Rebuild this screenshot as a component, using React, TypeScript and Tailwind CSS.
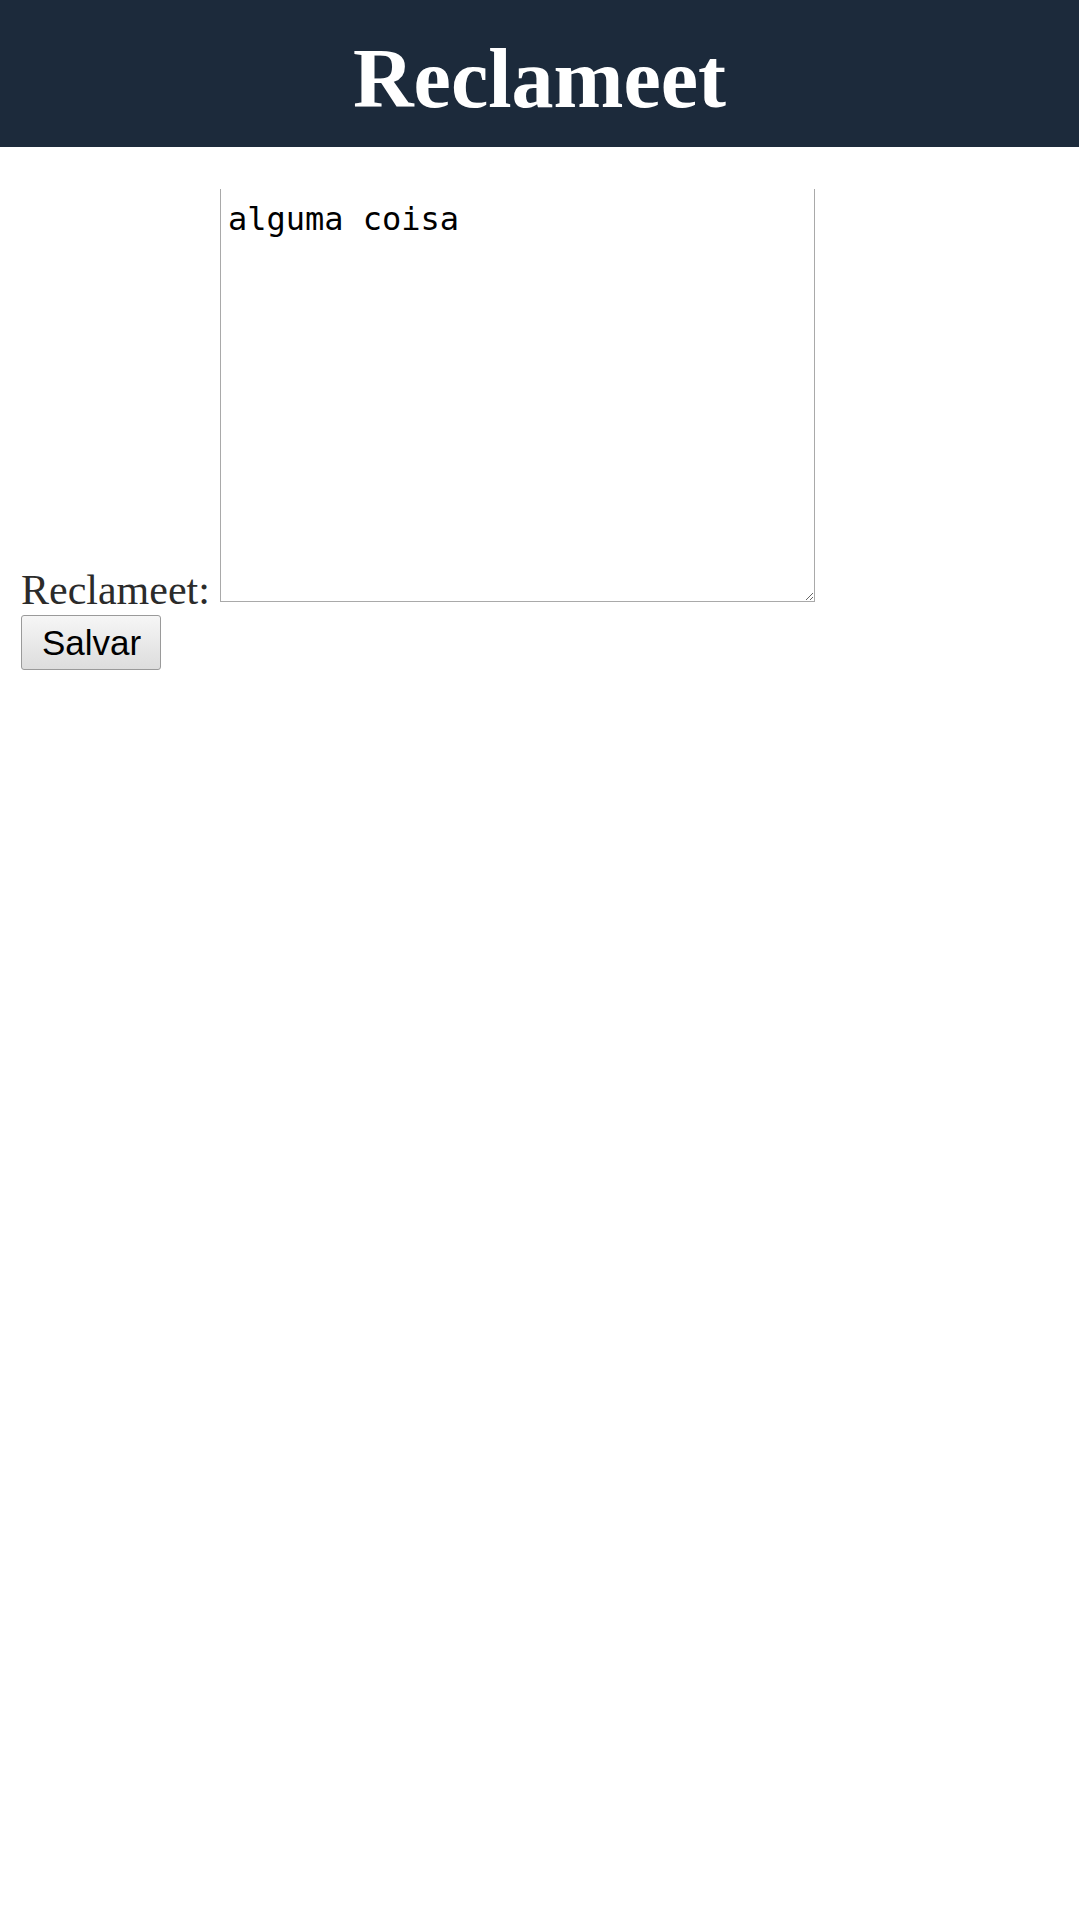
import { useState } from "react";

const App = () => {
  const [texto, setTexto] = useState("alguma coisa");

  return (
    <div className="min-h-screen bg-white">
      <header className="h-[147px] bg-[#1c2a3b] flex items-center justify-center">
        <h1 className="text-[84px] leading-none font-bold text-white font-['Liberation_Serif',serif] pt-[10px]">
          Reclameet
        </h1>
      </header>

      <form
        className="pl-[21px] pt-[42px]"
        onSubmit={(e) => e.preventDefault()}
      >
        <div className="flex items-end">
          <label
            htmlFor="reclamacao"
            className="text-[42px] leading-none mr-[10px] mb-[-9px] text-[#2b2b2b] font-['Liberation_Serif',serif]"
          >
            Reclameet:
          </label>
          <textarea
            id="reclamacao"
            value={texto}
            onChange={(e) => setTexto(e.target.value)}
            className="w-[595px] h-[413px] border-x border-b border-t-0 border-[#a9a9a9] pt-[6px] pl-[7px] text-[32px] text-black font-['DejaVu_Sans_Mono',monospace] outline-none"
          />
        </div>

        <button
          type="submit"
          className="mt-[13px] w-[140px] h-[55px] pl-[20px] text-left rounded-[3px] border border-[#9a9a9a] bg-gradient-to-b from-[#f6f6f6] to-[#dddddd] text-[35px] leading-none text-black font-['Liberation_Sans',Arial,sans-serif]"
        >
          Salvar
        </button>
      </form>
    </div>
  );
};

export default App;
